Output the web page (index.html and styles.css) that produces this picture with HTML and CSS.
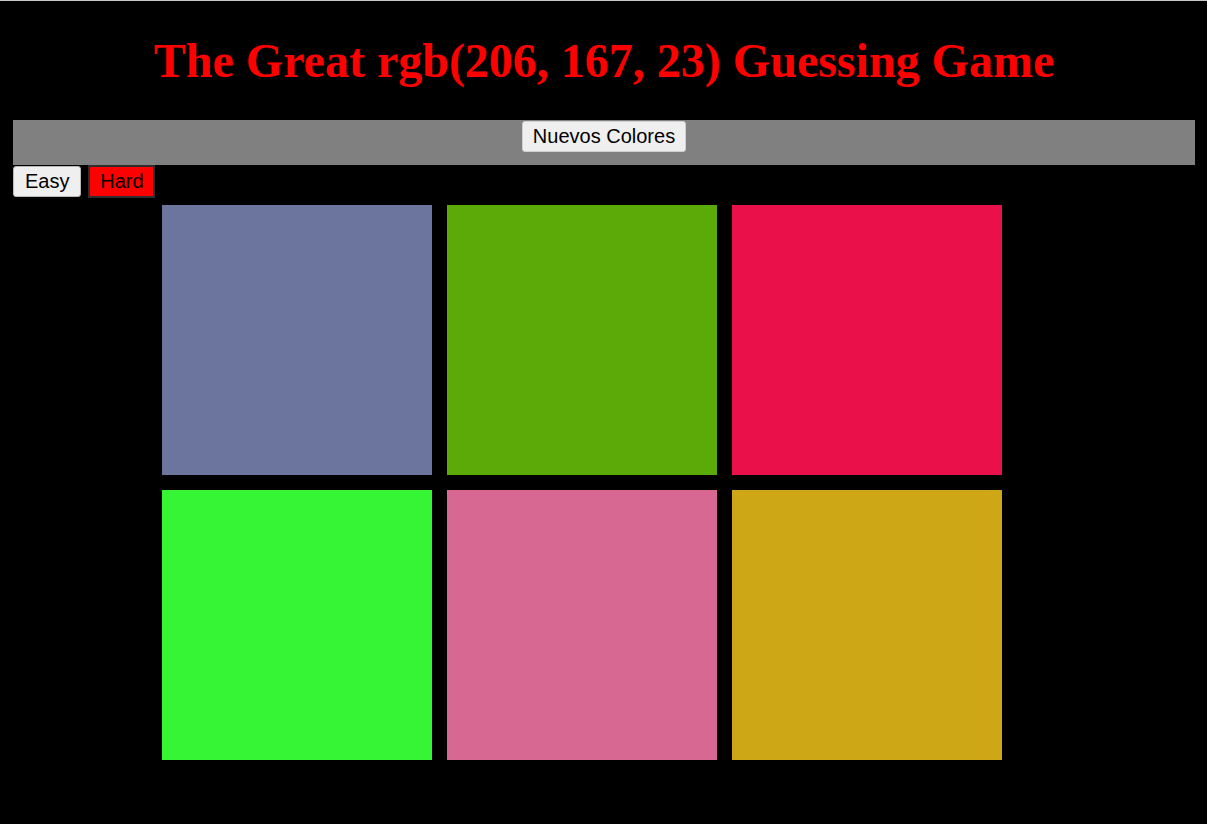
FILE: index.html
```html
<!DOCTYPE html>
<html lang="es">
<head>
<meta charset="utf-8">
<title>Color Game</title>
<link rel="stylesheet" href="styles.css">
</head>
<body>
<div class="page">
  <h1 class="title">The Great <span class="target">rgb(206, 167, 23)</span> Guessing Game</h1>
  <div class="bar">
    <button class="btn btn-new">Nuevos Colores</button>
  </div>
  <div class="modes">
    <button class="btn btn-mode">Easy</button>
    <button class="btn btn-mode selected">Hard</button>
  </div>
  <div class="board">
    <div class="square sq1"></div>
    <div class="square sq2"></div>
    <div class="square sq3"></div>
    <div class="square sq4"></div>
    <div class="square sq5"></div>
    <div class="square sq6"></div>
  </div>
</div>
</body>
</html>
```

FILE: styles.css
```css
html, body {
  margin: 0;
  padding: 0;
  background: #000;
}
body {
  min-height: 824px;
  border-top: 1px solid #c8c8c8;
  box-sizing: border-box;
}
.page {
  padding: 0 12px 0 13px;
}
.title {
  margin: 0;
  height: 119px;
  padding-top: 32px;
  box-sizing: border-box;
  text-align: center;
  line-height: 55px;
  font-family: "Liberation Serif", "Times New Roman", serif;
  font-weight: bold;
  font-size: 48px;
  color: #ff0000;
}
.bar {
  background: #808080;
  height: 45px;
  display: flex;
  justify-content: center;
  align-items: flex-start;
}
.btn {
  font-family: "Liberation Sans", Arial, sans-serif;
  font-size: 20px;
  color: #000;
  background: #efefef;
  border: 1px solid #767676;
  border-radius: 3px;
  cursor: pointer;
}
.btn-new {
  height: 31px;
  padding: 0 10px;
  margin-top: 1px;
  border-color: #d0d0d0;
}
.modes {
  display: flex;
  align-items: flex-start;
  gap: 7px;
  height: 40px;
}
.btn-mode {
  height: 31px;
  padding: 0 11px;
  margin-top: 1px;
  border-color: #b8b8b8;
}
.btn-mode.selected {
  background: #ff0000;
  border: 2px solid #2e2e2e;
  border-radius: 0;
  height: 33px;
  width: 67px;
  margin-top: 0;
  padding: 0;
}
.board {
  display: grid;
  grid-template-columns: repeat(3, 270px);
  grid-auto-rows: 270px;
  gap: 15px;
  margin-left: 149px;
}
.sq1 { background: #6b759d; }
.sq2 { background: #5caa07; }
.sq3 { background: #ea114b; }
.sq4 { background: #36f535; }
.sq5 { background: #d66891; }
.sq6 { background: #cea717; }
```
